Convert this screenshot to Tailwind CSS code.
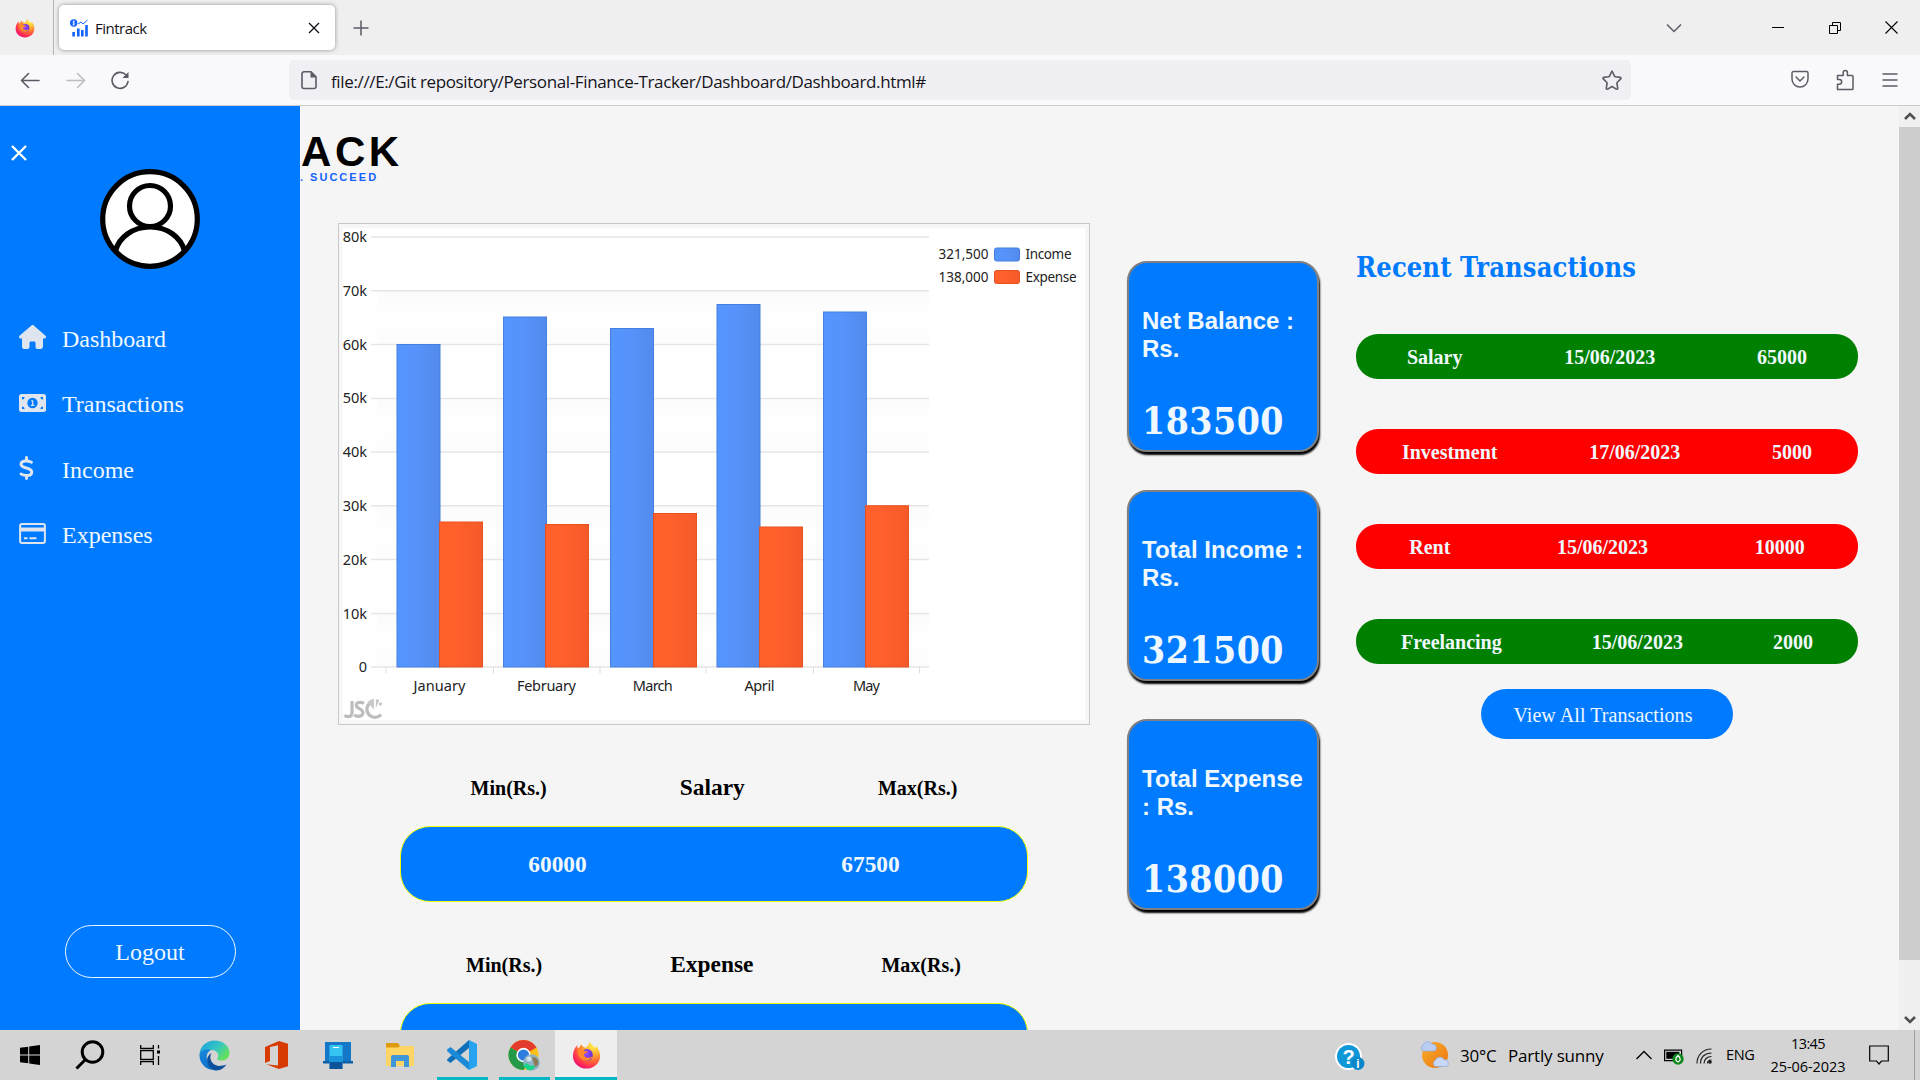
<!DOCTYPE html>
<html lang="en">
<head>
<meta charset="utf-8">
<title>Fintrack</title>
<script src="https://cdn.jsdelivr.net/npm/@tailwindcss/browser@4"></script>
</head>
<body class="w-[1920px] h-[1080px] overflow-hidden flex flex-col bg-[#f5f5f5] font-['Open_Sans',sans-serif]">

<!-- shared gradients and the Firefox logo -->
<svg class="absolute w-0 h-0">
  <defs>
    <radialGradient id="ffBody" cx="0.75" cy="0.15" r="0.95"><stop offset="0" stop-color="#fff44f"/><stop offset=".35" stop-color="#ffb02e"/><stop offset=".6" stop-color="#ff6a36"/><stop offset=".85" stop-color="#ff2a55"/><stop offset="1" stop-color="#e5107a"/></radialGradient>
    <radialGradient id="ffGlobe" cx=".4" cy=".4" r=".7"><stop offset="0" stop-color="#a14dff"/><stop offset="1" stop-color="#5b2bd0"/></radialGradient>
    <symbol id="firefox" viewBox="0 0 32 32">
      <path fill="url(#ffBody)" d="M20 1c1 4 4 5 6 7l1-2c2 3 4 7 4 11 0 8-7 14-15 14S1 25 1 17c0-5 2-9 5-12v4c1-1 2-1 3-2 0-1 0-2 1-3 1 2 3 3 5 4 2-2 4-4 5-7z"/>
      <circle cx="16.500" cy="16" r="6.500" fill="url(#ffGlobe)"/>
      <path fill="#ff8a2b" d="M6 10c3-1.500 6-.5 8 1.500l3.500.7c-.8 1.800-3.500 1.800-4.500 3.300 0 2.500 2.500 4 5 3.500 2 0 3-1 4.500-2-1 4-5 6-9 5-4-1-7-5-7.500-12z"/>
    </symbol>
  </defs>
</svg>

<!-- tab strip -->
<header class="h-[55px] flex-none bg-[#efefef] flex items-center">
  <div class="w-[54px] h-full border-r border-[#b4b4b6] flex items-center pl-[15px]"><svg class="w-5 h-5"><use href="#firefox"/></svg></div>
  <div class="ml-[5px] w-[276px] h-[45px] bg-white rounded-[5px] shadow-[0_0_4px_rgba(0,0,0,0.4)] flex items-center pl-[11px] pr-[15px]">
    <svg class="w-[18px] h-[18px]" viewBox="0 0 18 18"><g fill="#1463ff"><circle cx="3.700" cy="4" r="3.700"/><rect x="2.300" y="13" width="2.600" height="4.500"/><rect x="7" y="9.500" width="2.600" height="8"/><rect x="11" y="11" width="2.600" height="6.500"/><rect x="15.200" y="6" width="2.600" height="11.500"/></g><path d="M8 5l3-2 2 2 4.500-4" fill="none" stroke="#1463ff" stroke-width="1"/><path d="M2.700 5.500c2 1 2-1 1-1.500s-1-2 1-1.500M3.700 1.500v5" stroke="#fff" stroke-width=".8" fill="none"/></svg>
    <span class="ml-[7px] text-[15px] tracking-[-0.5px] text-[#15141a] flex-1 pt-[2px]">Fintrack</span>
    <svg class="w-3 h-3" viewBox="0 0 12 12"><path d="M1 1l10 10M11 1L1 11" stroke="#15141a" stroke-width="1.400"/></svg>
  </div>
  <svg class="ml-[18px] w-4 h-4" viewBox="0 0 16 16"><path d="M8 .5v15M.5 8h15" stroke="#5b5b66" stroke-width="1.500"/></svg>
  <div class="flex-1"></div>
  <svg class="w-4 h-4" viewBox="0 0 16 16"><path d="M1 4.500l7 7 7-7" fill="none" stroke="#5b5b66" stroke-width="1.500"/></svg>
  <svg class="ml-[90px] w-3 h-3" viewBox="0 0 12 12"><path d="M0 5.500h12" stroke="#000"/></svg>
  <svg class="ml-[45px] w-3 h-3" viewBox="0 0 12 12"><path d="M.5 3.500h8v8h-8zM3.500 3.500v-3h8v8h-3" fill="none" stroke="#000"/></svg>
  <svg class="ml-[44px] mr-[22px] w-[13px] h-[13px]" viewBox="0 0 13 13"><path d="M.5.5l12 12M12.500.5l-12 12" stroke="#000" stroke-width="1.100"/></svg>
</header>

<!-- navigation toolbar -->
<nav class="h-[51px] flex-none bg-[#f9f9fb] border-b border-[#cccccf] flex items-center text-[#5b5b66]">
  <svg class="ml-[20px] w-5 h-5" viewBox="0 0 20 20" fill="none" stroke="#5b5b66" stroke-width="1.600" stroke-linecap="round" stroke-linejoin="round"><path d="M19 10.500H2M8.500 3.500l-7 7 7 7"/></svg>
  <svg class="ml-[26px] w-5 h-5" viewBox="0 0 20 20" fill="none" stroke="#bcbcc2" stroke-width="1.600" stroke-linecap="round" stroke-linejoin="round"><path d="M1 10.500h17M11.500 3.500l7 7-7 7"/></svg>
  <svg class="ml-[24px] w-5 h-5" viewBox="0 0 20 20"><path d="M16 5A8 8 0 1 0 18 11.500" fill="none" stroke="#5b5b66" stroke-width="1.600" stroke-linecap="round"/><path d="M18.500 2v6h-6z" fill="#5b5b66"/></svg>
  <div class="ml-[159px] w-[1342px] h-10 rounded-[5px] bg-[#f0f0f4] flex items-center pl-[12px] pr-[8px]">
    <svg class="w-4 h-5" viewBox="0 0 16 20"><path d="M3 1.800h7l5 5V16.500a2 2 0 0 1-2 2H3a2 2 0 0 1-2-2V3.800a2 2 0 0 1 2-2z" fill="none" stroke="#5b5b66" stroke-width="1.600"/><path d="M9.500 1.500v6H15z" fill="#5b5b66"/></svg>
    <span class="ml-[14px] flex-1 text-[17px] tracking-[-0.36px] text-[#15141a] pt-[4px]">file:///E:/Git repository/Personal-Finance-Tracker/Dashboard/Dashboard.html#</span>
    <svg class="w-[22px] h-[22px]" viewBox="0 0 22 22"><path d="M11 2l2.500 5.200 1 .6 4.800.6q1.200.5.400 1.500l-3.600 3.600-.2 1 .9 4.800q-.2 1.200-1.500.8L11 17.500l-4.300 2.600q-1.300.4-1.500-.8l.9-4.800-.2-1-3.600-3.600q-.8-1 .4-1.500l4.800-.6 1-.6z" fill="none" stroke="#5b5b66" stroke-width="1.600" stroke-linejoin="round"/></svg>
  </div>
  <svg class="ml-[160px] w-[18px] h-5" viewBox="0 0 18 20" fill="none" stroke="#5b5b66" stroke-width="1.500"><path d="M2.500 1.500h13a1.500 1.500 0 0 1 1.500 1.500v6a8 8 0 0 1-16 0V3a1.500 1.500 0 0 1 1.500-1.500z"/><path d="M5 7l4 4 4-4" stroke-linecap="round"/></svg>
  <svg class="ml-[27px] w-[18px] h-[22px]" viewBox="0 0 18 22" fill="none" stroke="#5b5b66" stroke-width="1.500" stroke-linejoin="round"><path d="M1.500 20.500v-5.300h1.800a2.400 2.400 0 0 0 0-4.800H1.500V6.500h5.700V3.600a2.100 2.100 0 0 1 4.200 0v2.900h4.800a.8.8 0 0 1 .8.8v12.400a.8.8 0 0 1-.8.8z"/></svg>
  <svg class="ml-[28px] w-4 h-4" viewBox="0 0 16 16"><path d="M.5 2h15M.5 8h15M.5 14h15" stroke="#5b5b66" stroke-width="1.500"/></svg>
</nav>

<!-- page -->
<div class="h-[924px] flex-none flex overflow-hidden font-['Liberation_Serif',serif]">
  <aside class="w-[300px] h-full flex-none bg-[#007bff] text-[#f0f8ff] flex flex-col">
    <svg class="mt-[38px] ml-[10px] w-[18px] h-[18px]" viewBox="0 0 18 18"><path d="M2 2l14 14M16 2L2 16" stroke="#fff" stroke-width="2.400"/></svg>
    <svg class="mt-[7px] mx-auto w-[100px] h-[100px]" viewBox="0 0 100 100"><circle cx="50" cy="50" r="47.300" fill="#fff" stroke="#000" stroke-width="5.200"/><circle cx="50" cy="37" r="20.500" fill="none" stroke="#000" stroke-width="5.200"/><path d="M15.500 82C19 68 33 58 50 58s31 10 34.500 24" fill="none" stroke="#000" stroke-width="5.200"/></svg>
    <ul class="mt-[56px] text-[24px] leading-[28px]">
      <li class="h-[65.3px] flex items-start"><span class="w-[62px] pl-[19px] flex"><svg class="w-[27px] h-6" viewBox="0 0 576 512" fill="#dee5ef"><path d="M575.800 255.500c0 18-15 32.100-32 32.100h-32l.7 160.200c0 35-22 64-42 64H392c-22 0-40-18-40-40v-88c0-18-14-32-32-32h-64c-18 0-32 14-32 32v88c0 22-18 40-40 40H104c-22 0-40-18-40-40V287.600H32c-18 0-32-14-32-32.100 0-9 3-17 10-24L266.400 8c7-7 15-8 22-8s15 2 21 7L564.800 231.500c8 7 12 15 11 24z"/></svg></span><span>Dashboard</span></li>
      <li class="h-[65.3px] flex items-start"><span class="w-[62px] pl-[19px] pt-1 flex"><svg class="w-[27px] h-[18px]" viewBox="0 0 27 18"><rect width="27" height="18" rx="2.500" fill="#dee5ef"/><circle cx="13.500" cy="9" r="5.200" fill="#007bff"/><path d="M3 5.500V3h2.500A2.500 2.500 0 0 1 3 5.500zM24 5.500V3h-2.500A2.500 2.500 0 0 0 24 5.500zM3 12.500V15h2.500A2.500 2.500 0 0 0 3 12.500zM24 12.500V15h-2.500a2.500 2.500 0 0 1 2.500-2.500z" fill="#007bff"/><path d="M12.200 6.900h1.500v4.300M11.800 11.400h3.600" fill="none" stroke="#dee5ef" stroke-width="1.200"/></svg></span><span>Transactions</span></li>
      <li class="h-[65.3px] flex items-start"><span class="w-[62px] pl-[19px] flex"><svg class="w-[15px] h-6" viewBox="0 0 15 24" fill="none" stroke="#dee5ef" stroke-width="2.900" stroke-linecap="round" stroke-linejoin="round"><path d="M7.500 1.500v3M7.500 19.500v3M12.500 6.200C9 4.500 2.500 4 2 8c-.3 5 10.800 3 10.800 8 0 4.500-7 4.200-10.800 2"/></svg></span><span>Income</span></li>
      <li class="h-[65.3px] flex items-start"><span class="w-[62px] pl-[19px] pt-[2px] flex"><svg class="w-[27px] h-[21px]" viewBox="0 0 27 21"><rect x="1.100" y="1.100" width="24.800" height="18.800" rx="2" fill="none" stroke="#dee5ef" stroke-width="2"/><path d="M1 4.500h25v4H1z" fill="#dee5ef"/><path d="M5 15.200h3.500M10.500 15.200h7" stroke="#dee5ef" stroke-width="2"/></svg></span><span>Expenses</span></li>
    </ul>
    <div class="mt-auto mb-[52px] mx-auto w-[171px] h-[53px] rounded-[30px] border border-[#f0f8ff] flex items-center justify-center pt-[1px] text-[24px] leading-[28px]">Logout</div>
  </aside>

  <main class="w-[1599px] flex-none overflow-hidden">
    <div class="h-[117px] pt-[24px] font-['Liberation_Sans',sans-serif] font-bold">
      <div class="pl-[1px] text-[42px] leading-[44px] tracking-[3.6px] text-black">ACK</div>
      <div class="text-[11px] leading-3 tracking-[2.05px] text-[#1463ff] flex -mt-[3px]"><span class="w-[10px]">.</span>SUCCEED</div>
    </div>
    <div class="flex pl-[38px]">
      <section class="w-[752px]">
        <svg class="w-[752px] h-[503px] block" viewBox="338 223 752 503" font-family="'Noto Sans',sans-serif" font-size="14.500" fill="#222">
          <defs>
            <linearGradient id="inc"><stop offset="0" stop-color="#5694fe"/><stop offset=".35" stop-color="#5694fc"/><stop offset="1" stop-color="#538bec"/></linearGradient>
            <linearGradient id="exp"><stop offset="0" stop-color="#ff602c"/><stop offset=".4" stop-color="#ff602c"/><stop offset="1" stop-color="#f45a28"/></linearGradient>
            <linearGradient id="band" x2="0" y2="1"><stop offset="0" stop-color="#fbfbfb"/><stop offset=".5" stop-color="#fff"/><stop offset="1" stop-color="#fcfcfc"/></linearGradient>
          </defs>
          <rect x="338.500" y="223.500" width="751" height="501" fill="#f7f7f7" stroke="#c8c8c8"/>
          <rect x="343" y="228" width="742" height="492" fill="#fff"/>
          <g fill="url(#band)"><rect x="377" y="291" width="552" height="53"/><rect x="377" y="398" width="552" height="54"/><rect x="377" y="506" width="552" height="53"/><rect x="377" y="613" width="552" height="54"/></g>
          <path d="M371 237h558M371 290.750h558M371 344.500h558M371 398.500h558M371 452h558M371 505.750h558M371 559.500h558M371 613.500h558M371 667h558" stroke="#e6e6e6" stroke-width="1.300"/>
          <path d="M386 667v6.500M493.500 667v6.500M600 667v6.500M706 667v6.500M813.500 667v6.500M919.500 667v6.500" stroke="#ddd"/>
          <g fill="url(#inc)" stroke="#4580de">
            <rect x="397" y="344.500" width="43" height="322.500"/><rect x="503.500" y="317" width="43" height="350"/><rect x="610.500" y="328.500" width="43" height="338.500"/><rect x="717" y="304.500" width="43" height="362.500"/><rect x="823.500" y="312" width="43" height="355"/>
          </g>
          <g fill="url(#exp)" stroke="#e5521f">
            <rect x="439.500" y="522" width="43" height="145"/><rect x="545.500" y="524.500" width="43" height="142.500"/><rect x="653.500" y="513.500" width="43" height="153.500"/><rect x="759.500" y="527" width="43" height="140"/><rect x="865.500" y="505.750" width="43" height="161.250"/>
          </g>
          <g text-anchor="end">
            <text x="367" y="242" textLength="24.300">80k</text><text x="367" y="296" textLength="24.300">70k</text><text x="367" y="349.500" textLength="24.300">60k</text><text x="367" y="403" textLength="24.300">50k</text><text x="367" y="457" textLength="24.300">40k</text><text x="367" y="511" textLength="24.300">30k</text><text x="367" y="564.500" textLength="24.300">20k</text><text x="367" y="618.500" textLength="24.300">10k</text><text x="367" y="672">0</text>
          </g>
          <g text-anchor="middle">
            <text x="439.500" y="691" textLength="52">January</text><text x="546.500" y="691" textLength="59">February</text><text x="652.800" y="691" textLength="40">March</text><text x="759.500" y="691" textLength="30">April</text><text x="866.500" y="691" textLength="27">May</text>
          </g>
          <g font-size="13.500">
            <text x="938.500" y="259" textLength="50">321,500</text><text x="938.500" y="282" textLength="50">138,000</text>
            <text x="1025.500" y="259" textLength="46">Income</text><text x="1025.500" y="282" textLength="51">Expense</text>
          </g>
          <rect x="994.500" y="248" width="25" height="13" rx="2" fill="url(#inc)" stroke="#4580de"/>
          <rect x="994.500" y="270.500" width="25" height="13" rx="2" fill="url(#exp)" stroke="#e5521f"/>
          <g fill="none" stroke="#bdbdbd" stroke-width="3.200"><path d="M352 701v11q0 4.700-4 4.700-2 0-3.500-1.500"/><path d="M364 703.500q-3-1.800-6-.8-3 1.800-1 4.300l4.500 3q3 2.700 0 5.500-3.500 2-7.500-.5"/><path d="M370 703a8 8 0 1 0 11 11.500"/></g>
          <g fill="#c8c8c8"><path d="M374 709.500l-6.500-7q2.500-3.500 6.500-3.500z"/><path d="M375.800 708.500v-9.500l3.500 1z"/><circle cx="380.500" cy="704" r="1.700"/></g>
        </svg>
        <div class="ml-[66px] mr-[66px] mt-[48px] h-[52px] flex items-center justify-around font-bold text-[20px] leading-[28px] text-black pb-[24px]"><span>Min(Rs.)</span><span class="text-[23.4px] -mt-[2px]">Salary</span><span>Max(Rs.)</span></div>
        <div class="mx-[62px] h-[76px] rounded-[30px] border border-[#f5ff00] bg-[#007bff] text-[#f0f8ff] flex items-center justify-around pt-[1px] font-bold text-[23.4px]"><span>60000</span><span>67500</span></div>
        <div class="ml-[64px] mr-[65px] mt-[49px] h-[52px] flex items-center justify-around font-bold text-[20px] leading-[28px] text-black pb-[24px]"><span>Min(Rs.)</span><span class="text-[23.4px] -mt-[2px]">Expense</span><span>Max(Rs.)</span></div>
        <div class="mx-[62px] h-[76px] rounded-[30px] border border-[#f5ff00] bg-[#007bff]"></div>
      </section>

      <section class="ml-[37px] mt-[38px] flex flex-col gap-[38px] text-[#f0f8ff] font-bold">
        <div class="w-[192px] h-[191px] rounded-[20px] border-2 border-[#808080] bg-[#007bff] shadow-[1px_3px_2px_#000] pt-[44px] pl-[13px]"><p class="font-['Liberation_Sans',sans-serif] text-[24px] leading-[28px]">Net Balance :<br>Rs.</p><p class="mt-[36px] text-[37px] leading-[44px] tracking-[0.5px] font-['DejaVu_Serif_Condensed','DejaVu_Serif',serif]">183500</p></div>
        <div class="w-[192px] h-[191px] rounded-[20px] border-2 border-[#808080] bg-[#007bff] shadow-[1px_3px_2px_#000] pt-[44px] pl-[13px]"><p class="font-['Liberation_Sans',sans-serif] text-[24px] leading-[28px] whitespace-nowrap">Total Income :<br>Rs.</p><p class="mt-[36px] text-[37px] leading-[44px] tracking-[0.5px] font-['DejaVu_Serif_Condensed','DejaVu_Serif',serif]">321500</p></div>
        <div class="w-[192px] h-[191px] rounded-[20px] border-2 border-[#808080] bg-[#007bff] shadow-[1px_3px_2px_#000] pt-[44px] pl-[13px]"><p class="font-['Liberation_Sans',sans-serif] text-[24px] leading-[28px] whitespace-nowrap">Total Expense<br>: Rs.</p><p class="mt-[36px] text-[37px] leading-[44px] tracking-[0.5px] font-['DejaVu_Serif_Condensed','DejaVu_Serif',serif]">138000</p></div>
      </section>

      <section class="ml-[37px] w-[502px] mt-[27px] text-[20px] font-bold text-[#f0f8ff]">
        <h2 class="pt-[1px] text-[27px] leading-[34px] tracking-[0.12px] text-[#007bff] whitespace-nowrap font-['DejaVu_Serif_Condensed','DejaVu_Serif',serif]">Recent Transactions</h2>
        <div class="mt-[49px] flex flex-col gap-[50px]">
          <div class="h-[45px] rounded-[22px] bg-[#008000] flex items-center justify-around"><span>Salary</span><span>15/06/2023</span><span>65000</span></div>
          <div class="h-[45px] rounded-[22px] bg-[#ff0000] flex items-center justify-around"><span>Investment</span><span>17/06/2023</span><span>5000</span></div>
          <div class="h-[45px] rounded-[22px] bg-[#ff0000] flex items-center justify-around"><span>Rent</span><span>15/06/2023</span><span>10000</span></div>
          <div class="h-[45px] rounded-[22px] bg-[#008000] flex items-center justify-around"><span>Freelancing</span><span>15/06/2023</span><span>2000</span></div>
        </div>
        <div class="mt-[25px] mx-auto w-[252px] h-[50px] rounded-[25px] bg-[#007bff] flex items-center justify-center font-normal pr-[8px] pt-[1px] tracking-[0.06px]">View All Transactions</div>
      </section>
    </div>
  </main>

  <div class="w-[21px] flex-none bg-[#f0f0f0] flex flex-col items-center">
    <svg class="mt-[5px] w-3 h-[10px]" viewBox="0 0 12 10"><path d="M1 8l5-5 5 5" fill="none" stroke="#505050" stroke-width="2.600"/></svg>
    <div class="mt-[6px] w-full h-[833px] bg-[#cdcdcd]"></div>
    <svg class="mt-[55px] w-3 h-[10px]" viewBox="0 0 12 10"><path d="M1 2l5 5 5-5" fill="none" stroke="#505050" stroke-width="2.600"/></svg>
  </div>
</div>

<!-- taskbar -->
<footer class="h-[50px] flex-none bg-[#d4d4d4] flex text-black">
  <div class="w-[60px] flex items-center justify-center"><svg class="w-5 h-5" viewBox="0 0 20 20"><path d="M0 2.800l8.200-1.100v7.800H0zM9.200 1.500L20 0v9.500H9.200zM0 10.500h8.200v7.800L0 17.200zM9.200 10.500H20V20L9.200 18.500z"/></svg></div>
  <div class="w-[60px] flex items-center justify-center"><svg class="w-[30px] h-[30px]" viewBox="0 0 30 30" fill="none" stroke="#000" stroke-width="3"><circle cx="17.500" cy="12" r="10.300"/><path d="M10.500 19.500L1.500 28.500"/></svg></div>
  <div class="w-[60px] flex items-center justify-center"><svg class="w-5 h-5" viewBox="0 0 20 20" fill="none" stroke="#000" stroke-width="1.300"><path d="M.7 0v3.500h12.600V0M.7 5.700h12.600v8.600H.7zM.7 20v-3.500h12.600V20M18.500 0v3.500M18.500 11v9"/><path d="M17 5.500h3v3h-3z" fill="#000" stroke="none"/></svg></div>
  <div class="ml-[3px] w-[62px] flex items-center justify-center"><svg class="w-[31px] h-[31px]" viewBox="0 0 31 31"><defs><linearGradient id="eg" x2="1" y2=".6"><stop offset="0" stop-color="#1b9de2"/><stop offset=".6" stop-color="#36c8c0"/><stop offset="1" stop-color="#65e05a"/></linearGradient><linearGradient id="eb" x2="0" y2="1"><stop offset="0" stop-color="#1a86dc"/><stop offset="1" stop-color="#0b6fc8"/></linearGradient></defs><path d="M.5 14C1 6 8 .5 15.500.5 24 .5 30.500 6 30.500 13c0 5-4 7.500-8 7.500-3 0-5-1-4-2.500 2-3 0-8-6-8C6 10 2 12 .5 14z" fill="url(#eg)"/><path d="M.5 14c2-4 7-6 12-4-4 1-6 6-4 11 2 6 8 9 13 8C13 33-.5 27 .5 14z" fill="url(#eb)"/><path d="M12.500 13c-3 5 0 12 7 13 4 0 6-1 8-1.500-2 3-6 6-10 6-9-1-13-13-5-17.500z" fill="#0c4f9c"/></svg></div>
  <div class="w-[62px] flex items-center justify-center"><svg class="w-[23px] h-7" viewBox="0 0 23 28"><path d="M14 0l9 2.700v22.600L14 28 1 23.300l12 1.200V4.200L5 6v14l-5 2V6z" fill="#d83b01"/></svg></div>
  <div class="w-[62px] flex items-center justify-center"><svg class="w-[30px] h-7" viewBox="0 0 30 28"><path d="M2 1h26v20H2z" fill="#1577c8"/><path d="M0 20h30v2.500H0z" fill="#0d5fa8"/><rect x="6.500" y="4" width="13" height="24" rx="1" fill="#35c3f2"/><path d="M6.500 15h13v6h-13z" fill="#1b93db"/><path d="M6.500 21h13v7h-13z" fill="#0c559c"/><path d="M10 6.500h6" stroke="#fff"/></svg></div>
  <div class="w-[62px] flex items-center justify-center"><svg class="w-7 h-6" viewBox="0 0 28 24"><path d="M0 0h12l2 3v4H0z" fill="#dd9a10"/><path d="M0 4.500h12L14 3h14v20H0z" fill="#ffd665"/><path d="M5 24V14a2 2 0 0 1 2-2h14a2 2 0 0 1 2 2v10h-5v-6h-8v6z" fill="#3f97d9"/></svg></div>
  <div class="w-[62px] flex flex-col items-center"><svg class="mt-[9px] w-8 h-8 flex-none" viewBox="0 0 32 32"><path d="M23 1l8 4v22l-8 4z" fill="#27a2f0"/><path d="M23 1v8L4.500 24 1 21.500 1.500 20z" fill="#0f6fb8"/><path d="M23 31v-8L4.500 8 1 10.500l.5 2z" fill="#1b8bd8"/></svg><div class="mt-[6px] w-[51px] h-[3px] bg-[#00b7c3]"></div></div>
  <div class="w-[62px] flex flex-col items-center"><svg class="mt-[9px] w-8 h-8 flex-none" viewBox="0 0 32 32"><circle cx="15.500" cy="16" r="15" fill="#fbc116"/><path d="M15.500 16L2.500 8.500a15 15 0 0 1 26 0z" fill="#e33b2e"/><path d="M15.500 16L2.500 8.500a15 15 0 0 0 13 22.500l7-12z" fill="#24994a"/><circle cx="15.500" cy="16" r="7.200" fill="#fff"/><circle cx="15.500" cy="16" r="5.600" fill="#2f7de1"/><circle cx="23.500" cy="23.500" r="8.300" fill="#8fb2c4"/><path d="M16 27c1-4 4-3 5-1s5-1 6 2c-3 5-9 4-11-1z" fill="#17d78b"/><path d="M24 18c5 0 7 3 6 8l-3 2z" fill="#8b7c55"/><circle cx="21" cy="20" r="2.500" fill="#d4e2ea"/></svg><div class="mt-[6px] w-[51px] h-[3px] bg-[#00b7c3]"></div></div>
  <div class="w-[62px] bg-[#eee] flex flex-col items-center"><svg class="mt-[10px] w-[29px] h-[30px] flex-none"><use href="#firefox"/></svg><div class="mt-[7px] w-full h-[3px] bg-[#00b7c3]"></div></div>
  <div class="flex-1"></div>
  <div class="flex items-center">
    <svg class="w-[30px] h-7 mt-1" viewBox="0 0 30 28"><circle cx="13.500" cy="13.500" r="13.500" fill="#fff"/><circle cx="13.500" cy="13.500" r="11.500" fill="#0f97d7"/><text x="13.500" y="21" text-anchor="middle" font-family="Liberation Sans" font-weight="700" font-size="20" fill="#fff">?</text><circle cx="23" cy="20.500" r="6.500" fill="#0b86c9"/><text x="23" y="25" text-anchor="middle" font-family="Liberation Sans" font-weight="700" font-size="12" fill="#fff">i</text></svg>
    <svg class="ml-[54px] w-8 h-[30px] -mt-[2px]" viewBox="0 0 32 30"><defs><linearGradient id="sun" x2="1" y2="1"><stop offset="0" stop-color="#f5b32e"/><stop offset="1" stop-color="#f0700f"/></linearGradient></defs><circle cx="16" cy="16" r="13" fill="url(#sun)"/><path d="M4 12a3.500 3.500 0 0 1 0-6 5 5 0 0 1 9-1 4 4 0 0 1 3 7z" fill="#b9cdf3" stroke="#88a5dc" stroke-width=".6"/><path d="M16 27.500a3.500 3.500 0 0 1 0-6 5 5 0 0 1 9-1 4 4 0 0 1 3 7z" fill="#c6d7f7" stroke="#88a5dc" stroke-width=".6"/></svg>
    <div class="ml-[9px] w-[176px] text-[17px] tracking-[-0.18px] flex gap-[11px] pt-[1px] whitespace-nowrap"><span class="w-[37px] tracking-[-0.2px]">30°C</span><span>Partly sunny</span></div>
    <svg class="w-4 h-[10px]" viewBox="0 0 16 10"><path d="M.5 9L8 1.500 15.500 9" fill="none" stroke="#000" stroke-width="1.300"/></svg>
    <svg class="ml-[12px] w-5 h-4 mt-[3px]" viewBox="0 0 20 16"><path d="M.6 1.100h17v10.500H.6z" fill="#d4d4d4" stroke="#000" stroke-width="1.200"/><path d="M2.300 2.800h13v7h-13z" fill="#000"/><circle cx="14" cy="10" r="5.700" fill="#0f8a20"/><path d="M14 6.500c3 3 3 5 0 6.500-3-1.500-3-3.500 0-6.500z" fill="none" stroke="#fff" stroke-width="1.200"/></svg>
    <svg class="ml-[12px] w-4 h-4 mt-[2px]" viewBox="0 0 16 16" fill="none" stroke="#222" stroke-width="1.200"><path d="M1 15.500C1 7 7 1 15.500 1M4.500 15.500C4.500 9 9 5 15.500 5M8 15.500c0-4 3-7 7.500-7"/><path d="M11.500 15.500c0-2 1.500-3.500 4-3.500"/><circle cx="14" cy="14" r="1.200" fill="#000"/></svg>
    <div class="ml-[14px] w-[43px] text-[14.5px] tracking-[-0.3px]">ENG</div>
    <div class="w-[78px] text-center text-[14.5px] leading-[23px] tracking-[-0.05px] -mt-[1px]"><div class="tracking-[-0.6px]">13:45</div><div>25-06-2023</div></div>
    <svg class="ml-[22px] w-5 h-5" viewBox="0 0 20 20"><path d="M.7 1h18.600v15h-6.800L10 19l-2.500-3H.7z" fill="none" stroke="#000" stroke-width="1.200"/></svg>
    <div class="ml-[25px] w-[6px] h-[50px] border-l border-[#a0a0a0]"></div>
  </div>
</footer>
</body>
</html>
